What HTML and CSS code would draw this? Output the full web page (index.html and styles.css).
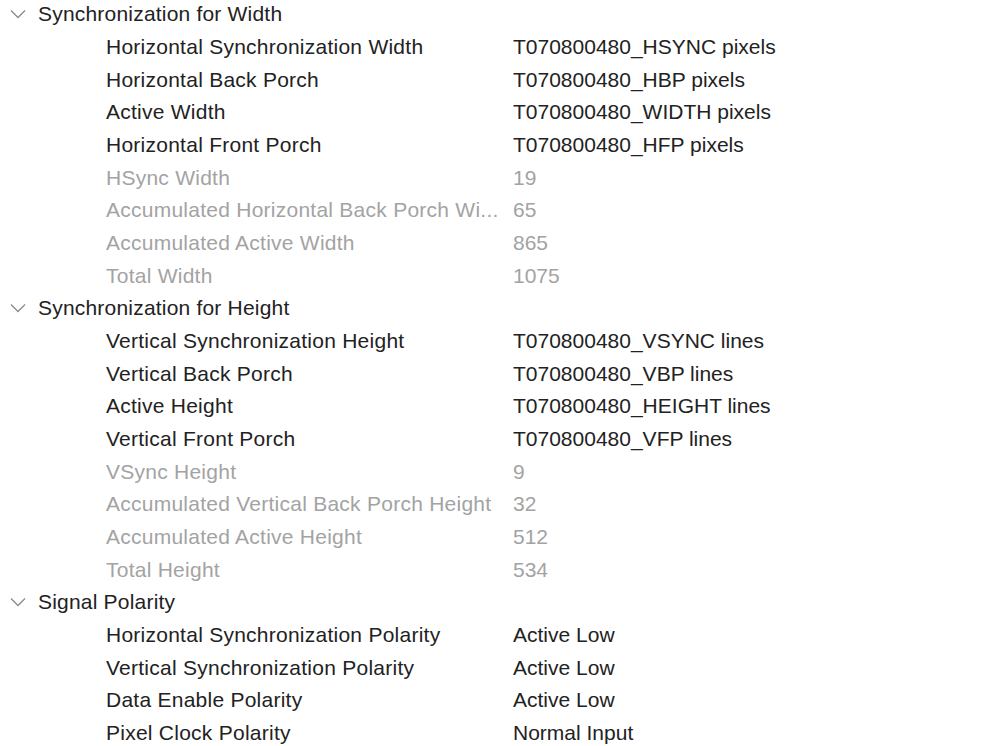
FILE: index.html
```html
<!DOCTYPE html>
<html>
<head>
<meta charset="utf-8">
<link rel="stylesheet" href="styles.css">
</head>
<body>
<div class="tree">
  <div class="row head"><span class="chev"><svg width="16" height="10" viewBox="0 0 16 10"><path d="M1 1.5 L8 8.5 L15 1.5" fill="none" stroke="#8a8a8a" stroke-width="1.3"/></svg></span><span class="htext">Synchronization for Width</span></div>
  <div class="row"><span class="label">Horizontal Synchronization Width</span><span class="val">T070800480_HSYNC pixels</span></div>
  <div class="row"><span class="label">Horizontal Back Porch</span><span class="val">T070800480_HBP pixels</span></div>
  <div class="row"><span class="label">Active Width</span><span class="val">T070800480_WIDTH pixels</span></div>
  <div class="row"><span class="label">Horizontal Front Porch</span><span class="val">T070800480_HFP pixels</span></div>
  <div class="row dis"><span class="label">HSync Width</span><span class="val">19</span></div>
  <div class="row dis"><span class="label">Accumulated Horizontal Back Porch Wi...</span><span class="val">65</span></div>
  <div class="row dis"><span class="label">Accumulated Active Width</span><span class="val">865</span></div>
  <div class="row dis"><span class="label">Total Width</span><span class="val">1075</span></div>

  <div class="row head"><span class="chev"><svg width="16" height="10" viewBox="0 0 16 10"><path d="M1 1.5 L8 8.5 L15 1.5" fill="none" stroke="#8a8a8a" stroke-width="1.3"/></svg></span><span class="htext">Synchronization for Height</span></div>
  <div class="row"><span class="label">Vertical Synchronization Height</span><span class="val">T070800480_VSYNC lines</span></div>
  <div class="row"><span class="label">Vertical Back Porch</span><span class="val">T070800480_VBP lines</span></div>
  <div class="row"><span class="label">Active Height</span><span class="val">T070800480_HEIGHT lines</span></div>
  <div class="row"><span class="label">Vertical Front Porch</span><span class="val">T070800480_VFP lines</span></div>
  <div class="row dis"><span class="label">VSync Height</span><span class="val">9</span></div>
  <div class="row dis"><span class="label">Accumulated Vertical Back Porch Height</span><span class="val">32</span></div>
  <div class="row dis"><span class="label">Accumulated Active Height</span><span class="val">512</span></div>
  <div class="row dis"><span class="label">Total Height</span><span class="val">534</span></div>

  <div class="row head"><span class="chev"><svg width="16" height="10" viewBox="0 0 16 10"><path d="M1 1.5 L8 8.5 L15 1.5" fill="none" stroke="#8a8a8a" stroke-width="1.3"/></svg></span><span class="htext">Signal Polarity</span></div>
  <div class="row"><span class="label">Horizontal Synchronization Polarity</span><span class="val">Active Low</span></div>
  <div class="row"><span class="label">Vertical Synchronization Polarity</span><span class="val">Active Low</span></div>
  <div class="row"><span class="label">Data Enable Polarity</span><span class="val">Active Low</span></div>
  <div class="row"><span class="label">Pixel Clock Polarity</span><span class="val">Normal Input</span></div>
</div>
</body>
</html>
```

FILE: styles.css
```css
html, body {
  margin: 0;
  padding: 0;
  background: #ffffff;
}
body {
  font-family: "Liberation Sans", Arial, sans-serif;
  font-size: 21px;
  color: #222222;
  overflow: hidden;
}
.tree {
  margin-top: -2px;
  display: flex;
  flex-direction: column;
}
.row {
  height: 32.68px;
  display: flex;
  align-items: center;
  white-space: nowrap;
}
.row .label {
  width: 407px;
  padding-left: 106px;
  letter-spacing: 0.25px;
  flex: none;
}
.row .val {
  letter-spacing: 0;
  flex: none;
}
.row.dis {
  color: #a3a3a3;
}
.head .chev {
  width: 28px;
  padding-left: 10px;
  display: flex;
  align-items: center;
  flex: none;
}
.head .htext {
  letter-spacing: 0.2px;
  flex: none;
}
```
